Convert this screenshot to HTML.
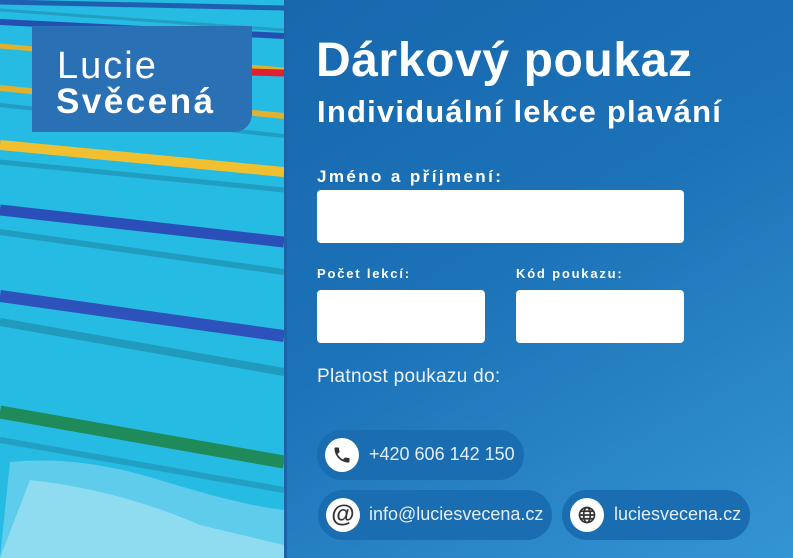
<!DOCTYPE html>
<html><head><meta charset="utf-8"><style>
*{margin:0;padding:0;box-sizing:border-box}
body{width:793px;height:558px;overflow:hidden;position:relative;font-family:"Liberation Sans",sans-serif;background:#1a6cb0}
#left{position:absolute;left:0;top:0;width:284px;height:558px;overflow:hidden;background:#27bde3}
#border{position:absolute;left:284px;top:0;width:3px;height:558px;background:#1e63a8}
#right{position:absolute;left:287px;top:0;width:506px;height:558px;background:linear-gradient(150deg,#1868ae 0%,#1c72b7 45%,#3495d3 100%)}
.logo{position:absolute;left:32px;top:26px;width:220px;height:106px;background:#2a70b5;border-radius:0 0 18px 0;color:#fff}
.logo .a{position:absolute;left:25px;top:21px;font-size:38px;font-weight:normal;letter-spacing:2px;line-height:1}
.logo .b{position:absolute;left:24px;top:58px;font-size:35px;font-weight:bold;letter-spacing:2.5px;line-height:1}
.t{position:absolute;color:#fff;white-space:nowrap}
.box{position:absolute;background:#fff;border-radius:4px}
.pill{position:absolute;height:50px;border-radius:25px;background:#1a6db0;color:#e3edf8;font-size:18px}
.pill .ic{position:absolute;left:8px;top:8px;width:34px;height:34px;border-radius:50%;background:#fff;display:flex;align-items:center;justify-content:center}
.pill span{position:absolute;left:52px;top:14px;white-space:nowrap}
</style></head><body>
<div id="left">
<svg width="284" height="558" viewBox="0 0 284 558">
<rect width="284" height="558" fill="#26bbe2"/>
<g stroke-linecap="butt" fill="none">
<path d="M0 2 L284 8" stroke="#1f5fb0" stroke-width="5"/>
<path d="M0 10 L284 30" stroke="#1f7f9f" stroke-width="3" opacity=".5"/>
<path d="M0 22 L284 36" stroke="#2350b0" stroke-width="6"/>
<path d="M0 46 L284 70" stroke="#e0b030" stroke-width="5"/>
<path d="M250 72 L284 73" stroke="#e02030" stroke-width="7"/>
<path d="M0 88 L284 116" stroke="#e0b030" stroke-width="6"/>
<path d="M0 105 L284 136" stroke="#1d7fa0" stroke-width="4" opacity=".5"/>
<path d="M0 145 L284 172" stroke="#f0c030" stroke-width="10"/>
<path d="M0 162 L284 190" stroke="#1a809f" stroke-width="5" opacity=".5"/>
<path d="M0 210 L284 242" stroke="#2a4fb8" stroke-width="11"/>
<path d="M0 232 L284 272" stroke="#1a7d9c" stroke-width="6" opacity=".5"/>
<path d="M0 296 L284 336" stroke="#2d52bc" stroke-width="12"/>
<path d="M0 322 L284 372" stroke="#197a98" stroke-width="8" opacity=".5"/>
<path d="M0 412 L284 462" stroke="#1f8a5a" stroke-width="13"/>
<path d="M0 440 L284 490" stroke="#1b7898" stroke-width="6" opacity=".4"/>
</g>
<path d="M10 462 Q80 455 160 480 T284 510 L284 558 L0 558 Z" fill="#c8eef8" opacity=".35"/>
<path d="M30 480 Q120 490 200 525 L284 545 L284 558 L0 558 Z" fill="#eaf8fc" opacity=".35"/>
</svg>
<div class="logo"><div class="a">Lucie</div><div class="b">Svěcená</div></div>
</div>
<div id="border"></div>
<div id="right"></div>
<div class="t" style="left:316px;top:33px;font-size:48px;font-weight:bold;letter-spacing:.6px">Dárkový poukaz</div>
<div class="t" style="left:317px;top:94px;font-size:31px;font-weight:bold;letter-spacing:1.2px">Individuální lekce plavání</div>
<div class="t" style="left:317px;top:167px;font-size:17px;font-weight:bold;letter-spacing:2.4px">Jméno a příjmení:</div>
<div class="box" style="left:317px;top:190px;width:367px;height:53px"></div>
<div class="t" style="left:317px;top:266px;font-size:13px;font-weight:bold;letter-spacing:1.8px">Počet lekcí:</div>
<div class="t" style="left:516px;top:266px;font-size:13px;font-weight:bold;letter-spacing:1.8px">Kód poukazu:</div>
<div class="box" style="left:317px;top:290px;width:168px;height:53px"></div>
<div class="box" style="left:516px;top:290px;width:168px;height:53px"></div>
<div class="t" style="left:317px;top:366px;font-size:19px;letter-spacing:.3px;color:#eef4fb">Platnost poukazu do:</div>
<div class="pill" style="left:317px;top:430px;width:207px">
<div class="ic"><svg width="20" height="20" viewBox="0 0 24 24"><path fill="#333" d="M6.6 10.8c1.4 2.8 3.8 5.1 6.6 6.6l2.2-2.2c.3-.3.7-.4 1-.2 1.1.4 2.3.6 3.6.6.6 0 1 .4 1 1V20c0 .6-.4 1-1 1C10.6 21 3 13.4 3 4c0-.6.4-1 1-1h3.5c.6 0 1 .4 1 1 0 1.3.2 2.5.6 3.6.1.3 0 .7-.2 1z"/></svg></div>
<span>+420 606 142 150</span></div>
<div class="pill" style="left:318px;top:490px;width:234px">
<div class="ic" style="font-size:24px;font-weight:bold;color:#333">@</div>
<span style="left:51px">info@luciesvecena.cz</span></div>
<div class="pill" style="left:562px;top:490px;width:188px">
<div class="ic"><svg width="20" height="20" viewBox="0 0 24 24" fill="none" stroke="#333" stroke-width="2"><circle cx="12" cy="12" r="9"/><ellipse cx="12" cy="12" rx="4" ry="9"/><path d="M3 12h18M4.5 7.5h15M4.5 16.5h15"/></svg></div>
<span>luciesvecena.cz</span></div>
</body></html>
